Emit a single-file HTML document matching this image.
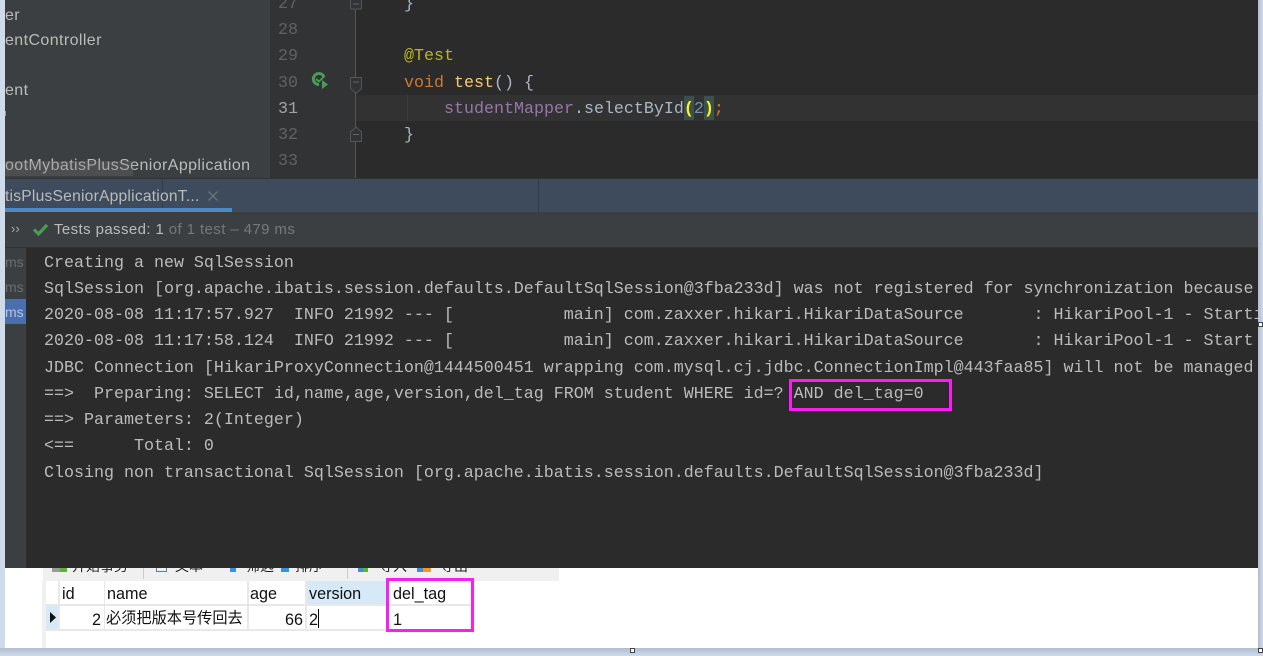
<!DOCTYPE html>
<html><head><meta charset="utf-8">
<style>
html,body{margin:0;padding:0;width:1263px;height:656px;overflow:hidden;background:#cfdbea}
.a{position:absolute}
.t{position:absolute;white-space:pre;line-height:20px}
.s{font-family:"Liberation Sans","DejaVu Sans",sans-serif;font-size:16px;letter-spacing:.4px;color:#bbbbbb}
.m{font-family:"Liberation Mono","DejaVu Sans Mono",monospace;font-size:16.67px;color:#a9b7c6}
.n{font-family:"Liberation Mono",monospace;font-size:16.67px;color:#606366}
.c{font-family:"Liberation Sans","Noto Sans CJK SC",sans-serif;font-size:16.2px;color:#111}
.b{position:absolute;top:-12px;white-space:pre;line-height:20px;font:14px/20px "Noto Sans CJK SC",sans-serif;color:#222}
</style></head>
<body>
<div class="a" style="left:0;top:0;width:5px;height:656px;background:#cfdbea"></div>
<div class="a" style="left:1258px;top:0;width:5px;height:648px;background:linear-gradient(90deg,#b0bdd0,#cfdbea)"></div>
<div class="a" style="left:0;top:648px;width:1263px;height:8px;background:linear-gradient(#b0bdd0,#cfdbea)"></div>

<!-- project panel -->
<div class="a" style="left:5px;top:0;width:265px;height:178px;background:#3c3f41"></div>
<div class="t s" style="left:5px;top:6px">er</div>
<div class="t s" style="left:5px;top:31px">entController</div>
<div class="t s" style="left:5px;top:81px">ent</div>
<div class="a" style="left:5px;top:111px;width:1px;height:5px;background:#999"></div>
<div class="t s" style="left:5px;top:156px">ootMybatisPlusSeniorApplication</div>
<div class="a" style="left:5px;top:161px;width:128px;height:15px;background:rgba(120,120,120,.28)"></div>

<!-- editor -->
<div class="a" style="left:270px;top:0;width:988px;height:178px;background:#2b2b2b"></div>
<div class="a" style="left:270px;top:0;width:86px;height:178px;background:#313335"></div>
<div class="a" style="left:356px;top:95px;width:902px;height:26px;background:#323232"></div>
<div class="a" style="left:355px;top:0;width:1px;height:178px;background:#555"></div>
<div class="t n" style="left:278px;top:-5px">27</div>
<div class="t n" style="left:278px;top:21px">28</div>
<div class="t n" style="left:278px;top:47px">29</div>
<div class="t n" style="left:278px;top:74px">30</div>
<div class="t n" style="left:278px;top:100px;color:#a4a3a3">31</div>
<div class="t n" style="left:278px;top:126px">32</div>
<div class="t n" style="left:278px;top:152px">33</div>

<svg class="a" style="left:310px;top:70px" width="24" height="22" viewBox="0 0 24 22">
<path d="M14 7A5.500 5.500 0 1 0 9 14.500" fill="none" stroke="#499c54" stroke-width="3"/>
<path d="M6 9l3 2.500 5-5" fill="none" stroke="#499c54" stroke-width="1.800"/>
<path d="M12 10l6 4.500-6 4.500z" fill="#499c54"/>
</svg>
<svg class="a" style="left:349px;top:0" width="14" height="145" viewBox="0 0 14 145">
<g fill="#313335" stroke="#555" stroke-width="1">
<path d="M1.500-5h11v14h-11z"/>
<path d="M1.500 77.500h11v11l-5.500 5-5.500-5z"/>
<path d="M7 127l5.500 5v9.500h-11V132z"/>
</g>
<g stroke="#666"><path d="M4 4h6M4 82h6M4 134.500h6"/></g>
</svg>

<div class="a" style="left:684px;top:96px;width:10px;height:24px;background:#3b514d"></div>
<div class="a" style="left:704px;top:96px;width:10px;height:24px;background:#3b514d"></div>
<div class="a" style="left:407px;top:95px;width:1px;height:26px;background:#3b3b3b"></div>

<div class="t m" style="left:404px;top:-5px">}</div>
<div class="t m" style="left:404px;top:47px;color:#bbb529">@Test</div>
<div class="t m" style="left:404px;top:74px"><span style="color:#cc7832">void</span> <span style="color:#ffc66d">test</span>() {</div>
<div class="t m" style="left:444px;top:100px"><span style="color:#9876aa">studentMapper</span>.selectById<span style="color:#ffef28;font-weight:bold">(</span><span style="color:#6897bb">2</span><span style="color:#ffef28;font-weight:bold">)</span><span style="color:#cc7832">;</span></div>
<div class="t m" style="left:404px;top:126px">}</div>

<!-- tool window tabs -->
<div class="a" style="left:5px;top:178px;width:1253px;height:1px;background:#323232"></div>
<div class="a" style="left:5px;top:179px;width:1253px;height:33px;background:#3d4b5c"></div>
<div class="a" style="left:162px;top:179px;width:1px;height:33px;background:#333d49"></div>
<div class="a" style="left:538px;top:179px;width:1px;height:33px;background:#333d49"></div>
<div class="t s" style="left:5px;top:187px;font-size:15.600px;letter-spacing:.23px">tisPlusSeniorApplicationT...</div>
<svg class="a" style="left:207px;top:190px" width="12" height="12" viewBox="0 0 12 12"><path d="M1.500 1.500l9 9M10.500 1.500l-9 9" stroke="#6e7275" stroke-width="1.300"/></svg>
<div class="a" style="left:5px;top:208px;width:227px;height:4px;background:#4a88c7"></div>

<!-- toolbar -->
<div class="a" style="left:5px;top:212px;width:1253px;height:35px;background:#3c3f41"></div>
<div class="t s" style="left:11px;top:219px;font-size:13px;letter-spacing:0;color:#aaa">››</div>
<svg class="a" style="left:32px;top:222px" width="17" height="15" viewBox="0 0 17 15"><path d="M2 7.500l4.500 4.500L15 3" fill="none" stroke="#499c54" stroke-width="3.200"/></svg>
<div class="t s" style="left:54px;top:220px;font-size:15px;letter-spacing:.4px">Tests passed: 1 <span style="color:#787878">of 1 test – 479 ms</span></div>
<div class="a" style="left:5px;top:247px;width:1253px;height:1px;background:#323232"></div>

<!-- test tree -->
<div class="a" style="left:5px;top:248px;width:21px;height:320px;background:#3c3f41"></div>
<div class="a" style="left:5px;top:299px;width:21px;height:25px;background:#4b6eaf"></div>
<div class="t s" style="left:5px;top:252px;font-size:14px;letter-spacing:0;color:#6b6e70">ms</div>
<div class="t s" style="left:5px;top:277px;font-size:14px;letter-spacing:0;color:#6b6e70">ms</div>
<div class="t s" style="left:5px;top:302px;font-size:14px;letter-spacing:0;color:#b8c4dc">ms</div>

<!-- console -->
<div class="a" style="left:26px;top:248px;width:1232px;height:320px;background:#2b2b2b;overflow:hidden">
<div class="t m" style="left:18px;top:6px;color:#bbb">Creating a new SqlSession</div>
<div class="t m" style="left:18px;top:32px;color:#bbb">SqlSession [org.apache.ibatis.session.defaults.DefaultSqlSession@3fba233d] was not registered for synchronization because</div>
<div class="t m" style="left:18px;top:58px;color:#bbb">2020-08-08 11:17:57.927  INFO 21992 --- [           main] com.zaxxer.hikari.HikariDataSource       : HikariPool-1 - Starting...</div>
<div class="t m" style="left:18px;top:84px;color:#bbb">2020-08-08 11:17:58.124  INFO 21992 --- [           main] com.zaxxer.hikari.HikariDataSource       : HikariPool-1 - Start</div>
<div class="t m" style="left:18px;top:111px;color:#bbb">JDBC Connection [HikariProxyConnection@1444500451 wrapping com.mysql.cj.jdbc.ConnectionImpl@443faa85] will not be managed</div>
<div class="t m" style="left:18px;top:137px;color:#bbb">==&gt;  Preparing: SELECT id,name,age,version,del_tag FROM student WHERE id=? AND del_tag=0</div>
<div class="t m" style="left:18px;top:163px;color:#bbb">==&gt; Parameters: 2(Integer)</div>
<div class="t m" style="left:18px;top:189px;color:#bbb">&lt;==      Total: 0</div>
<div class="t m" style="left:18px;top:216px;color:#bbb">Closing non transactional SqlSession [org.apache.ibatis.session.defaults.DefaultSqlSession@3fba233d]</div>
</div>
<div class="a" style="left:789px;top:379px;width:157px;height:26px;border:3px solid #f81ff0"></div>

<!-- white table area -->
<div class="a" style="left:5px;top:568px;width:1253px;height:80px;background:#fff"></div>
<div class="a" style="left:43px;top:568px;width:516px;height:13px;background:#f0f0f0;overflow:hidden">
<div class="a" style="left:9px;top:0;width:8px;height:4px;background:#9a9a9a"></div>
<div class="a" style="left:17px;top:0;width:7px;height:4px;background:#5cb531"></div>
<div class="b" style="left:29px">开始事务</div>
<div class="a" style="left:100px;top:0;width:1px;height:11px;background:#ccc"></div>
<div class="a" style="left:113px;top:0;width:11px;height:4px;border:1px solid #5b7fa6;border-top:0;box-sizing:border-box"></div>
<div class="b" style="left:132px">文本</div>
<div class="a" style="left:187px;top:0;width:6px;height:4px;background:#3a8ee6"></div>
<div class="b" style="left:203px">筛选</div>
<div class="a" style="left:238px;top:0;width:8px;height:4px;background:#3a8ee6"></div>
<div class="b" style="left:252px">排序</div>
<div class="a" style="left:304px;top:0;width:1px;height:11px;background:#ccc"></div>
<div class="a" style="left:315px;top:0;width:5px;height:4px;background:#3a8ee6"></div>
<div class="a" style="left:320px;top:0;width:5px;height:4px;background:#5cb531"></div>
<div class="b" style="left:336px">导入</div>
<div class="a" style="left:374px;top:0;width:6px;height:4px;background:#3a8ee6"></div>
<div class="a" style="left:380px;top:0;width:8px;height:4px;background:#f09a1e"></div>
<div class="b" style="left:397px">导出</div>
</div>
<div class="a" style="left:42px;top:581px;width:4px;height:67px;background:#f0f0f0"></div>

<!-- table -->
<div class="a" style="left:306px;top:581px;width:80px;height:24px;background:#d7e8f7"></div>
<div class="a" style="left:46px;top:605px;width:13px;height:25px;background:#d7e8f7"></div>
<div class="a" style="left:46px;top:604px;width:428px;height:2px;background:#e8e8e8"></div>
<div class="a" style="left:46px;top:629px;width:428px;height:2px;background:#e8e8e8"></div>
<div class="a" style="left:58px;top:581px;width:2px;height:50px;background:#e8e8e8"></div>
<div class="a" style="left:104px;top:581px;width:1px;height:50px;background:#e8e8e8"></div>
<div class="a" style="left:247px;top:581px;width:2px;height:50px;background:#e8e8e8"></div>
<div class="a" style="left:305px;top:581px;width:2px;height:50px;background:#e8e8e8"></div>
<div class="t c" style="left:62px;top:584px">id</div>
<div class="t c" style="left:107px;top:584px">name</div>
<div class="t c" style="left:250px;top:584px">age</div>
<div class="t c" style="left:309px;top:584px">version</div>
<div class="t c" style="left:393px;top:584px">del_tag</div>
<div class="t c" style="left:92px;top:610px">2</div>
<div class="t c" style="left:106px;top:609px;font-size:15.200px">必须把版本号传回去</div>
<div class="t c" style="left:285px;top:610px">66</div>
<div class="t c" style="left:309px;top:610px">2</div>
<div class="a" style="left:318px;top:609px;width:1px;height:19px;background:#000"></div>
<div class="t c" style="left:393px;top:610px">1</div>
<svg class="a" style="left:49px;top:611px" width="8" height="13" viewBox="0 0 8 13"><path d="M1 1l6 5.500-6 5.500z" fill="#111"/></svg>
<div class="a" style="left:386px;top:578px;width:82px;height:48px;border:3px solid #f81ff0"></div>

<!-- handles -->
<div class="a" style="left:1258px;top:322px;width:3px;height:3px;background:#fff;border:1px solid #444"></div>
<div class="a" style="left:1258px;top:648px;width:3px;height:3px;background:#fff;border:1px solid #444"></div>
<div class="a" style="left:630px;top:648px;width:3px;height:3px;background:#fff;border:1px solid #444"></div>
</body></html>
